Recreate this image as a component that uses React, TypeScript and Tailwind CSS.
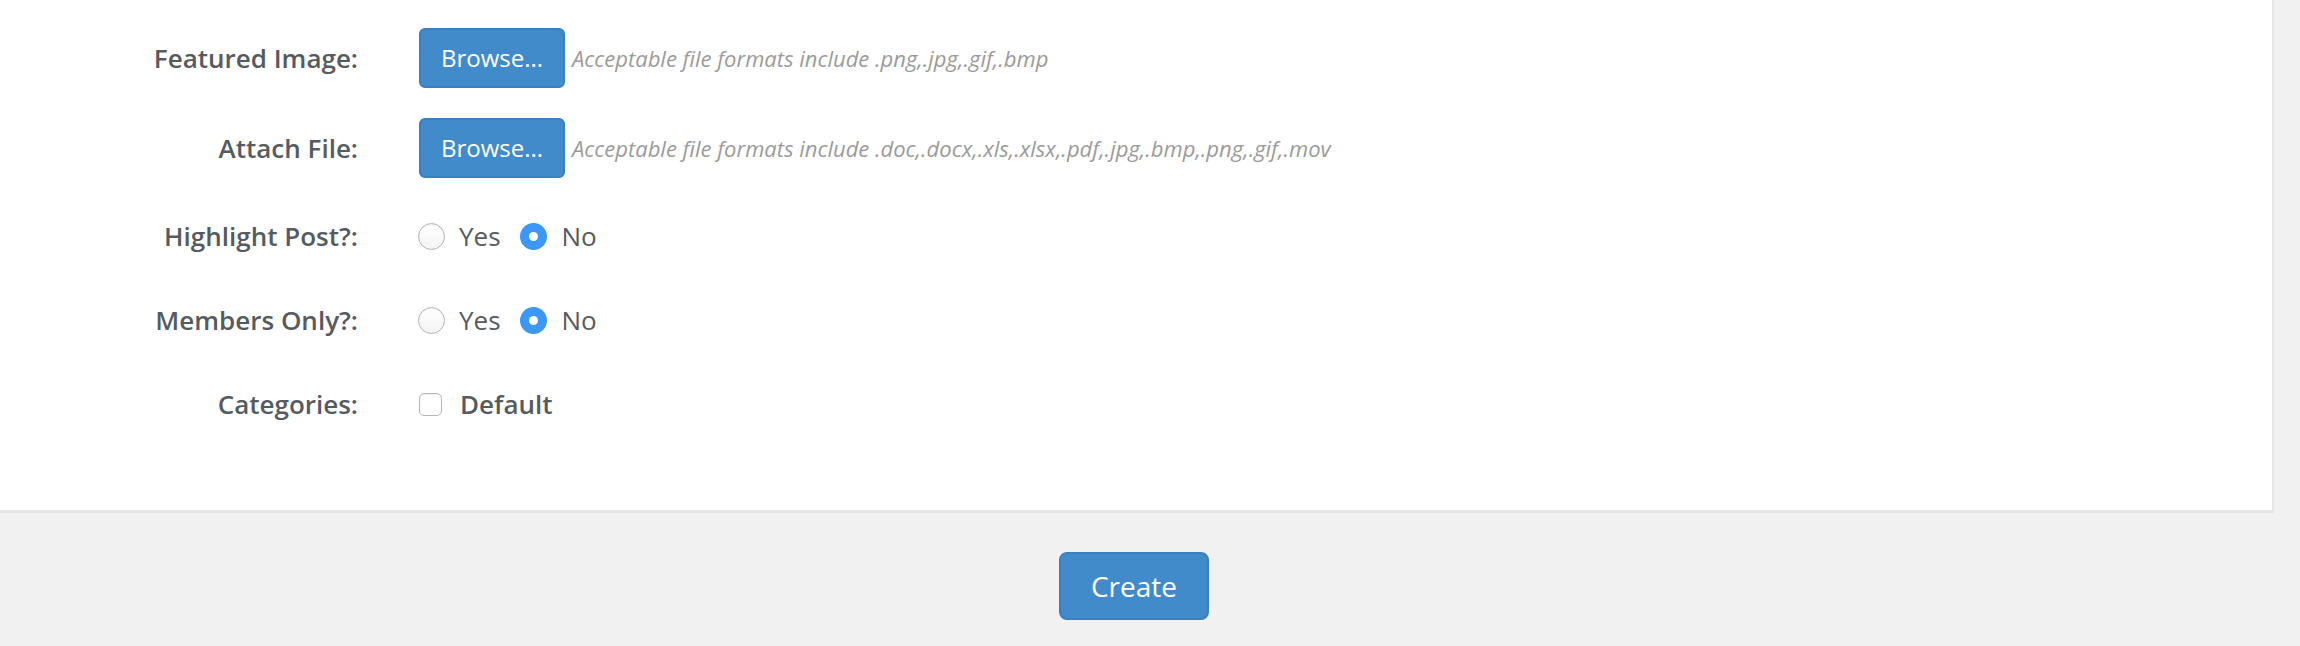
const font = "font-['Open_Sans',sans-serif]"

function Label({ text }: { text: string }) {
  return (
    <div className="w-[358px] shrink-0 text-right text-[26px] font-semibold text-[#565b61]">
      {text}
    </div>
  )
}

function Radio({ checked }: { checked: boolean }) {
  if (checked) {
    return (
      <span className="flex h-[27px] w-[27px] items-center justify-center rounded-full bg-[#3c97f6]">
        <span className="h-[9px] w-[9px] rounded-full bg-white" />
      </span>
    )
  }
  return (
    <span className="h-[27px] w-[27px] rounded-full border border-[#b3b3b3] bg-gradient-to-b from-white to-[#f4f4f4] shadow-[inset_0_1px_1px_rgba(0,0,0,0.06)]" />
  )
}

function YesNo({ label }: { label: string }) {
  return (
    <div className="mt-[44px] flex h-[40px] items-center first:mt-[38px]">
      <Label text={label} />
      <div className="ml-[60px] flex items-center text-[26px] text-[#565b61]">
        <Radio checked={false} />
        <span className="ml-[14px]">Yes</span>
        <span className="ml-[19px]">
          <Radio checked={true} />
        </span>
        <span className="ml-[15px]">No</span>
      </div>
    </div>
  )
}

function FileRow({ label, formats, first }: { label: string; formats: string; first?: boolean }) {
  return (
    <div className={first ? "flex h-[60px] items-center" : "mt-[30px] flex h-[60px] items-center"}>
      <Label text={label} />
      <button className="ml-[61px] h-[60px] w-[146px] rounded-[6px] border-2 border-[#3a7fbf] bg-[#428bca] text-[24px] text-white">
        Browse...
      </button>
      <span className="ml-[7px] text-[22px] italic text-[#9b9b9b]">{formats}</span>
    </div>
  )
}

export default function App() {
  return (
    <div className={`${font} min-h-[646px] w-full bg-[#f1f1f1]`}>
      <div className="w-[2274px] border-r-2 border-b-[3px] border-[#e6e6e6] bg-white pt-[28px] pb-[86px]">
        <FileRow
          first
          label="Featured Image:"
          formats="Acceptable file formats include .png,.jpg,.gif,.bmp"
        />
        <FileRow
          label="Attach File:"
          formats="Acceptable file formats include .doc,.docx,.xls,.xlsx,.pdf,.jpg,.bmp,.png,.gif,.mov"
        />
        <div>
          <YesNo label="Highlight Post?:" />
          <YesNo label="Members Only?:" />
        </div>
        <div className="mt-[44px] flex h-[40px] items-center">
          <Label text="Categories:" />
          <div className="ml-[61px] flex items-center">
            <span className="h-[23px] w-[23px] rounded-[5px] border border-[#b8b8b8] bg-white shadow-[inset_0_1px_2px_rgba(0,0,0,0.08)]" />
            <span className="ml-[18px] text-[26px] font-semibold text-[#565b61]">Default</span>
          </div>
        </div>
      </div>
      <div className="flex w-[2268px] justify-center pt-[39px]">
        <button className="h-[68px] w-[150px] rounded-[8px] border-2 border-[#3a7fbf] bg-[#428bca] text-[28px] text-white">
          Create
        </button>
      </div>
    </div>
  )
}
